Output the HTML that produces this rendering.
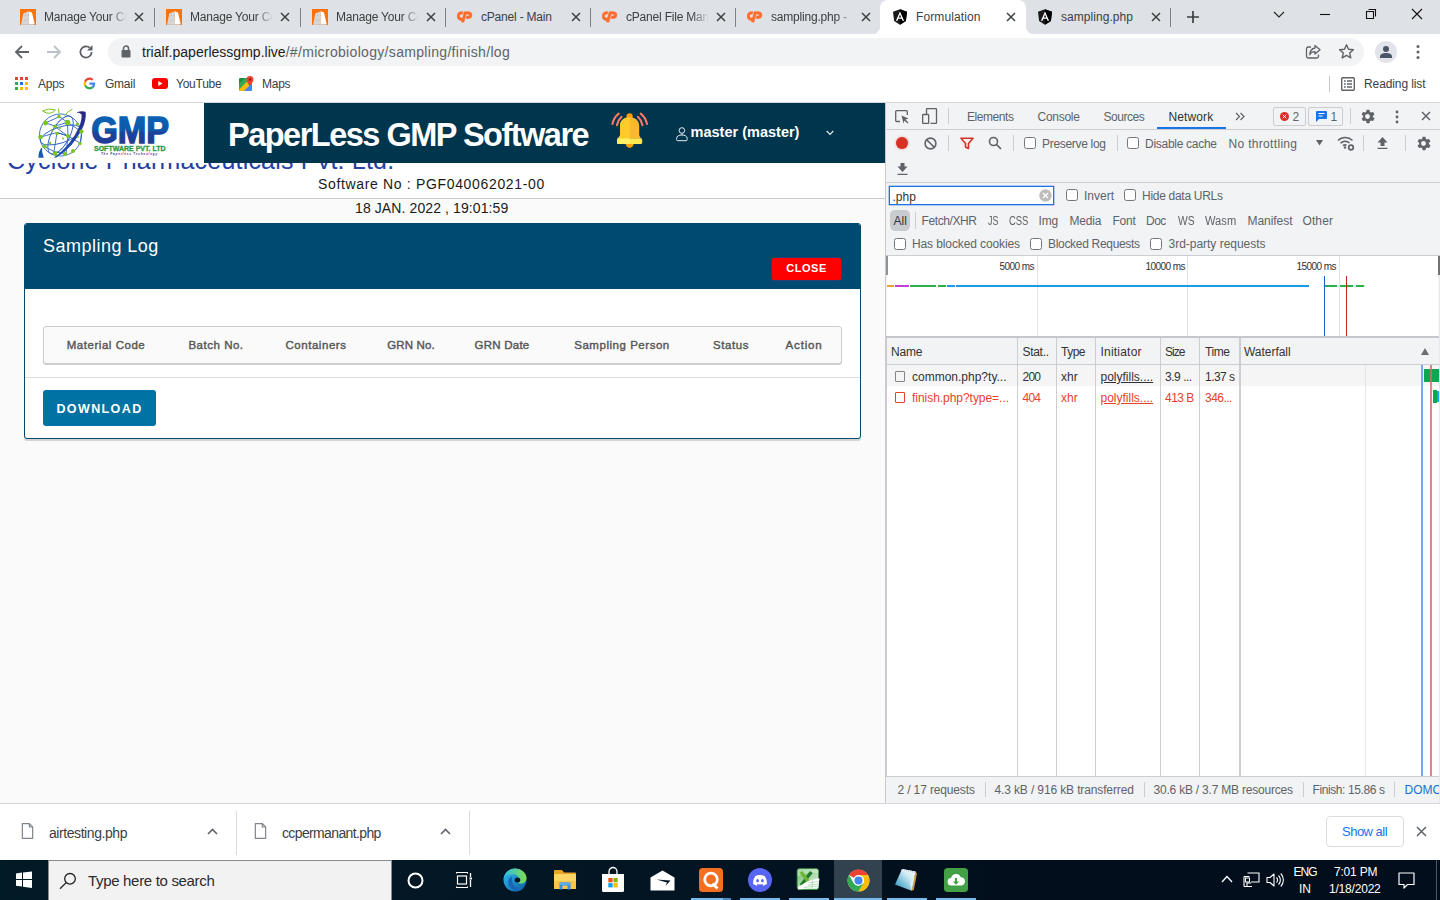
<!DOCTYPE html>
<html><head><meta charset="utf-8">
<style>
*{box-sizing:border-box;margin:0;padding:0}
html,body{width:1440px;height:900px;overflow:hidden;background:#fff;font-family:"Liberation Sans",sans-serif;}
.abs{position:absolute}
#root{position:relative;width:1440px;height:900px;overflow:hidden}
/* ---------- chrome tab strip ---------- */
#tabstrip{position:absolute;left:0;top:0;width:1440px;height:34px;background:#dee1e6}
.tab{position:absolute;top:0;height:34px;font-size:12px;color:#3c4043;white-space:nowrap}
.tab .t{position:absolute;left:36px;top:10px;width:86px;overflow:hidden;letter-spacing:-0.2px;
  -webkit-mask-image:linear-gradient(90deg,#000 66px,transparent 83px);mask-image:linear-gradient(90deg,#000 66px,transparent 83px)}
.tab .x{position:absolute;left:125px;top:11px;width:12px;height:12px}
.tab .fav{position:absolute;left:12px;top:9px;width:16px;height:16px}
.sep{position:absolute;top:8px;width:1px;height:19px;background:#7f8185}
#atab{position:absolute;left:880px;top:0;width:146px;height:34px;background:#fff;border-radius:8px 8px 0 0}
/* ---------- toolbar ---------- */
#toolbar{position:absolute;left:0;top:34px;width:1440px;height:36px;background:#fff}
#omni{position:absolute;left:108px;top:4px;width:1256px;height:28px;border-radius:14px;background:#f1f3f4}
#bookmarks{position:absolute;left:0;top:70px;width:1440px;height:32px;background:#fff;font-size:12px;color:#3c4043}
#chromeline{position:absolute;left:0;top:102px;width:1440px;height:1px;background:#d5d7da}
.bm{position:absolute;top:7px;letter-spacing:-0.25px}

/* ---------- page ---------- */
#page{position:absolute;left:0;top:103px;width:885px;height:700px;background:#fafafa;overflow:hidden}
#ptop{position:absolute;left:0;top:0;width:885px;height:95px;background:#fff}
#pline{position:absolute;left:0;top:95px;width:885px;height:1px;background:#ccc}
#cy{position:absolute;left:7px;top:43px;font-size:25px;color:#2540a5;white-space:nowrap;letter-spacing:0.2px}
#hdr{position:absolute;left:204px;top:0;width:681px;height:60px;background:#00364d}
#logo{position:absolute;left:0;top:0;width:204px;height:60px;background:#fff}
#ttl{position:absolute;left:227px;top:14px;font-size:32.5px;font-weight:bold;color:#fff;white-space:nowrap;letter-spacing:-1.5px}
.pc{position:absolute;white-space:nowrap;color:#1a1a1a;font-size:13px}
#card{position:absolute;left:24px;top:120px;width:837px;height:216px;background:#fff;border:1px solid #004a70;border-radius:3px;box-shadow:0 2px 0 #d4d4d4;overflow:hidden}
#chead{position:absolute;left:0;top:0;width:835px;height:65px;background:#004a70}
#tbl{position:absolute;left:18px;top:102px;width:799px;height:38px;background:#fafafa;border:1px solid #ccc;border-radius:3px;box-shadow:0 1px 0 #d0d0d0}
.th{position:absolute;top:12px;font-size:11.5px;color:#565656;white-space:nowrap;transform:translateX(-50%);letter-spacing:0.6px;-webkit-text-stroke:0.4px #565656}

/* ---------- devtools ---------- */
#dt{position:absolute;left:885px;top:103px;width:555px;height:700px;background:#f1f3f4;border-left:1px solid #c8cacd;font-size:12px;color:#5f6368;overflow:hidden}
#dt .tx{position:absolute;white-space:nowrap;line-height:14px}
#dt .hl{position:absolute;left:0;width:555px;height:1px;background:#cbcdd1}
#dt .vs{position:absolute;width:1px;height:16px;background:#cbcdd1}
#dt .cb{position:absolute;width:12px;height:12px;border:1px solid #767676;border-radius:2.5px;background:#fff}
#dt .col{position:absolute;top:235px;width:1px;height:438px;background:#cbcdd1}

/* ---------- downloads + taskbar ---------- */
#dl{position:absolute;left:0;top:803px;width:1440px;height:57px;background:#fff;border-top:1px solid #d4d6d9;font-size:14px;color:#3c4043}
#tb{position:absolute;left:0;top:860px;width:1440px;height:40px;background:linear-gradient(90deg,#021a26 0,#031523 45%,#020e1c 70%,#020e1c 100%)}
#tb .ul{position:absolute;top:38px;height:2px;background:#76b9ed}
#tb .w{position:absolute;color:#fff;white-space:nowrap;font-size:12px}
</style></head><body><div id="root">

<!-- TABSTRIP -->
<div id="tabstrip">
  <div id="atab"></div>
<div class="tab" style="left:8px;width:146px"><svg class="fav" viewBox="0 0 16 16"><rect width="16" height="16" fill="#ff7208"/><path d="M3.300 4.400L8.800 2.200 8.800 15.700 1 16z" fill="#d6d6d6"/><path d="M8.800 2.200L12 3.600 14.700 15.300 8.800 15.700z" fill="#fff"/><path d="M1 15.300h13.700v.7H1z" fill="#c4c4c4"/><circle cx="5.500" cy="6.500" r=".55" fill="#b0b0b0"/><circle cx="8.400" cy="6.500" r=".55" fill="#b0b0b0"/><path d="M4.200 11.500l2.400.100 1.900-2.100" stroke="#b8b8b8" stroke-width=".6" fill="none"/></svg><div class="t">Manage Your Co</div><svg class="x" viewBox="0 0 12 12"><path d="M2 2l8 8M10 2l-8 8" stroke="#3c4043" stroke-width="1.5" fill="none"/></svg></div>
<div class="tab" style="left:154px;width:146px"><svg class="fav" viewBox="0 0 16 16"><rect width="16" height="16" fill="#ff7208"/><path d="M3.300 4.400L8.800 2.200 8.800 15.700 1 16z" fill="#d6d6d6"/><path d="M8.800 2.200L12 3.600 14.700 15.300 8.800 15.700z" fill="#fff"/><path d="M1 15.300h13.700v.7H1z" fill="#c4c4c4"/><circle cx="5.500" cy="6.500" r=".55" fill="#b0b0b0"/><circle cx="8.400" cy="6.500" r=".55" fill="#b0b0b0"/><path d="M4.200 11.500l2.400.100 1.900-2.100" stroke="#b8b8b8" stroke-width=".6" fill="none"/></svg><div class="t">Manage Your Co</div><svg class="x" viewBox="0 0 12 12"><path d="M2 2l8 8M10 2l-8 8" stroke="#3c4043" stroke-width="1.5" fill="none"/></svg></div>
<div class="tab" style="left:300px;width:146px"><svg class="fav" viewBox="0 0 16 16"><rect width="16" height="16" fill="#ff7208"/><path d="M3.300 4.400L8.800 2.200 8.800 15.700 1 16z" fill="#d6d6d6"/><path d="M8.800 2.200L12 3.600 14.700 15.300 8.800 15.700z" fill="#fff"/><path d="M1 15.300h13.700v.7H1z" fill="#c4c4c4"/><circle cx="5.500" cy="6.500" r=".55" fill="#b0b0b0"/><circle cx="8.400" cy="6.500" r=".55" fill="#b0b0b0"/><path d="M4.200 11.500l2.400.100 1.900-2.100" stroke="#b8b8b8" stroke-width=".6" fill="none"/></svg><div class="t">Manage Your Co</div><svg class="x" viewBox="0 0 12 12"><path d="M2 2l8 8M10 2l-8 8" stroke="#3c4043" stroke-width="1.5" fill="none"/></svg></div>
<div class="tab" style="left:445px;width:146px"><svg class="fav" viewBox="0 0 16 16"><path d="M5.900 2.800H4.300a4.300 4.300 0 0 0 0 8.600h1.100l.6-2.300H4.400a2 2 0 0 1 0-4h.900z" fill="#ff6c2c" stroke="#ff6c2c" stroke-width=".7"/><path d="M7.300 2.800h4.200a3.300 3.300 0 0 1 .2 6.600H9.200l.6-2.300h1.500a1 1 0 0 0 0-2H9l-2.100 8H4.600z" fill="#ff6c2c" stroke="#ff6c2c" stroke-width=".7"/></svg><div class="t" style="-webkit-mask-image:none;mask-image:none">cPanel - Main</div><svg class="x" viewBox="0 0 12 12"><path d="M2 2l8 8M10 2l-8 8" stroke="#3c4043" stroke-width="1.5" fill="none"/></svg></div>
<div class="tab" style="left:590px;width:146px"><svg class="fav" viewBox="0 0 16 16"><path d="M5.900 2.800H4.300a4.300 4.300 0 0 0 0 8.600h1.100l.6-2.300H4.400a2 2 0 0 1 0-4h.900z" fill="#ff6c2c" stroke="#ff6c2c" stroke-width=".7"/><path d="M7.300 2.800h4.200a3.300 3.300 0 0 1 .2 6.600H9.200l.6-2.300h1.500a1 1 0 0 0 0-2H9l-2.100 8H4.600z" fill="#ff6c2c" stroke="#ff6c2c" stroke-width=".7"/></svg><div class="t">cPanel File Mana</div><svg class="x" viewBox="0 0 12 12"><path d="M2 2l8 8M10 2l-8 8" stroke="#3c4043" stroke-width="1.5" fill="none"/></svg></div>
<div class="tab" style="left:735px;width:146px"><svg class="fav" viewBox="0 0 16 16"><path d="M5.900 2.800H4.300a4.300 4.300 0 0 0 0 8.600h1.100l.6-2.300H4.400a2 2 0 0 1 0-4h.900z" fill="#ff6c2c" stroke="#ff6c2c" stroke-width=".7"/><path d="M7.300 2.800h4.200a3.300 3.300 0 0 1 .2 6.600H9.200l.6-2.300h1.500a1 1 0 0 0 0-2H9l-2.100 8H4.600z" fill="#ff6c2c" stroke="#ff6c2c" stroke-width=".7"/></svg><div class="t">sampling.php - </div><svg class="x" viewBox="0 0 12 12"><path d="M2 2l8 8M10 2l-8 8" stroke="#3c4043" stroke-width="1.5" fill="none"/></svg></div>
<div class="tab" style="left:880px;width:146px"><svg class="fav" viewBox="0 0 16 16"><path d="M8 0.3L1 2.8l1.1 9.2L8 15.7l5.9-3.7L15 2.8z" fill="#1a1a1a"/><path d="M8 0.3v15.4l5.9-3.7L15 2.8z" fill="#000"/><path d="M8 2.6L3.9 11.8h1.6l.85-2.1h3.3l.85 2.1h1.6zM8 5.6l1.1 2.8H6.9z" fill="#fff"/></svg><div class="t" style="-webkit-mask-image:none;mask-image:none;letter-spacing:0.1px">Formulation</div><svg class="x" viewBox="0 0 12 12"><path d="M2 2l8 8M10 2l-8 8" stroke="#3c4043" stroke-width="1.5" fill="none"/></svg></div>
<div class="tab" style="left:1025px;width:146px"><svg class="fav" viewBox="0 0 16 16"><path d="M8 0.3L1 2.8l1.1 9.2L8 15.7l5.9-3.7L15 2.8z" fill="#1a1a1a"/><path d="M8 0.3v15.4l5.9-3.7L15 2.8z" fill="#000"/><path d="M8 2.6L3.9 11.8h1.6l.85-2.1h3.3l.85 2.1h1.6zM8 5.6l1.1 2.8H6.9z" fill="#fff"/></svg><div class="t" style="-webkit-mask-image:none;mask-image:none;letter-spacing:0.05px">sampling.php</div><svg class="x" viewBox="0 0 12 12"><path d="M2 2l8 8M10 2l-8 8" stroke="#3c4043" stroke-width="1.5" fill="none"/></svg></div>
<div class="sep" style="left:154px"></div>
<div class="sep" style="left:300px"></div>
<div class="sep" style="left:445px"></div>
<div class="sep" style="left:590px"></div>
<div class="sep" style="left:735px"></div>
<div class="sep" style="left:1170px"></div>
<svg class="abs" style="left:1185px;top:9px" width="16" height="16" viewBox="0 0 16 16"><path d="M8 2v12M2 8h12" stroke="#3c4043" stroke-width="1.7"/></svg>
<svg class="abs" style="left:1273px;top:9px" width="12" height="12" viewBox="0 0 12 12"><path d="M1 3l5 5 5-5" stroke="#222" stroke-width="1.1" fill="none"/></svg>
<svg class="abs" style="left:1319px;top:9px" width="12" height="12" viewBox="0 0 12 12"><path d="M1 5.5h10" stroke="#111" stroke-width="1.1"/></svg>
<svg class="abs" style="left:1365px;top:8px" width="12" height="12" viewBox="0 0 12 12"><path d="M3.5 1.5h7v7M1.5 3.5h7v7h-7z" stroke="#111" stroke-width="1.1" fill="none"/></svg>
<svg class="abs" style="left:1411px;top:8px" width="12" height="12" viewBox="0 0 12 12"><path d="M1 1l10 10M11 1L1 11" stroke="#111" stroke-width="1.1"/></svg>

  <div class="abs" style="left:872px;top:26px;width:8px;height:8px;background:radial-gradient(circle at 0 0,#dee1e6 8px,#fff 8.5px)"></div>
  <div class="abs" style="left:1026px;top:26px;width:8px;height:8px;background:radial-gradient(circle at 100% 0,#dee1e6 8px,#fff 8.5px)"></div>
</div>

<!-- TOOLBAR -->
<div id="toolbar"><svg class="abs" style="left:14px;top:10px" width="16" height="16" viewBox="0 0 16 16"><path d="M15 8H2.5M8 2L2 8l6 6" stroke="#5f6368" stroke-width="1.8" fill="none"/></svg>
<svg class="abs" style="left:46px;top:10px" width="16" height="16" viewBox="0 0 16 16"><path d="M1 8h12.5M8 2l6 6-6 6" stroke="#bdc1c6" stroke-width="1.8" fill="none"/></svg>
<svg class="abs" style="left:78px;top:10px" width="16" height="16" viewBox="0 0 16 16"><path d="M13.6 8A5.6 5.6 0 1 1 11.7 3.8" stroke="#5f6368" stroke-width="1.8" fill="none"/><path d="M14.5 1v5.5H9z" fill="#5f6368"/></svg>
<div id="omni">
<svg class="abs" style="left:13px;top:7px" width="10" height="13" viewBox="0 0 10 13"><rect x="0.5" y="5" width="9" height="7.5" rx="1" fill="#5f6368"/><path d="M2.5 5.5V3.5a2.5 2.5 0 0 1 5 0v2" stroke="#5f6368" stroke-width="1.5" fill="none"/></svg>
<div class="abs" style="left:34px;top:5.500px;font-size:14px;color:#202124;letter-spacing:0.02px;white-space:nowrap">trialf.paperlessgmp.live<span style="color:#5f6368;letter-spacing:0.32px">/#/microbiology/sampling/finish/log</span></div>
<svg class="abs" style="left:1197px;top:6px" width="17" height="16" viewBox="0 0 17 16"><path d="M6 3H3.2A1.7 1.7 0 0 0 1.5 4.7v7.6A1.7 1.7 0 0 0 3.2 14h8.6a1.7 1.7 0 0 0 1.7-1.700V10.500" stroke="#5f6368" stroke-width="1.3" fill="none"/><path d="M10 1.5l5 4.300-5 4.300V7.600C7 7.600 5.500 9 4.800 10.800 5 7 7 4.500 10 4z" stroke="#5f6368" stroke-width="1.3" fill="none" stroke-linejoin="round"/></svg>
<svg class="abs" style="left:1230px;top:5px" width="17" height="17" viewBox="0 0 17 17"><path d="M8.5 1.800l2 4.500 4.900.5-3.700 3.300 1.100 4.800-4.300-2.500-4.300 2.500 1.100-4.800L1.600 6.800l4.900-.5z" stroke="#5f6368" stroke-width="1.4" fill="none" stroke-linejoin="round"/></svg>
</div>
<div class="abs" style="left:1375px;top:7px;width:22px;height:22px;border-radius:11px;background:#e2e4ea"></div>
<svg class="abs" style="left:1379px;top:11px" width="14" height="14" viewBox="0 0 14 14"><circle cx="7" cy="4" r="3" fill="#4a5568"/><path d="M1 13v-1.500C1 9 4 8 7 8s6 1 6 3.500V13z" fill="#4a5568"/></svg>
<svg class="abs" style="left:1416px;top:10px" width="4" height="16" viewBox="0 0 4 16"><circle cx="2" cy="2.500" r="1.500" fill="#5f6368"/><circle cx="2" cy="8" r="1.500" fill="#5f6368"/><circle cx="2" cy="13.500" r="1.500" fill="#5f6368"/></svg>
</div>
<div id="bookmarks"><svg class="abs" style="left:15px;top:7px" width="13" height="13" viewBox="0 0 13 13">
<rect x="0" y="0" width="3" height="3" fill="#ea4335"/><rect x="5" y="0" width="3" height="3" fill="#ea4335"/><rect x="10" y="0" width="3" height="3" fill="#ea4335"/>
<rect x="0" y="5" width="3" height="3" fill="#34a853"/><rect x="5" y="5" width="3" height="3" fill="#1a73e8"/><rect x="10" y="5" width="3" height="3" fill="#fbbc04"/>
<rect x="0" y="10" width="3" height="3" fill="#34a853"/><rect x="5" y="10" width="3" height="3" fill="#fbbc04"/><rect x="10" y="10" width="3" height="3" fill="#fbbc04"/></svg>
<div class="bm" style="left:38px">Apps</div>
<svg class="abs" style="left:83px;top:7px" width="13" height="13" viewBox="0 0 48 48"><path fill="#4285f4" d="M45 24.500c0-1.600-.1-2.700-.4-4H24v7.700h12c-.3 2-1.600 5-4.600 7l6.600 5.200c4.200-3.800 7-9.400 7-15.900z"/><path fill="#34a853" d="M24 46c6 0 11-2 14.600-5.400L32 35.400c-1.800 1.300-4.300 2.200-8 2.200-5.900 0-10.900-3.900-12.700-9.300l-6.900 5.300C8 41 15.400 46 24 46z"/><path fill="#fbbc05" d="M11.300 28.300A13.600 13.600 0 0 1 10.600 24c0-1.500.3-3 .7-4.300L4.400 14.400A22 22 0 0 0 2 24c0 3.500.9 6.900 2.400 9.800z"/><path fill="#ea4335" d="M24 10.500c4.200 0 7 1.800 8.600 3.300l6.300-6.100C35 4.100 30 2 24 2 15.400 2 8 7 4.400 14.400l6.900 5.300C13.100 14.400 18.100 10.500 24 10.500z"/></svg>
<div class="bm" style="left:105px">Gmail</div>
<svg class="abs" style="left:152px;top:8px" width="16" height="11" viewBox="0 0 16 11"><rect width="16" height="11" rx="3" fill="#f00"/><path d="M6.300 3l4.200 2.500-4.200 2.500z" fill="#fff"/></svg>
<div class="bm" style="left:176px">YouTube</div>
<svg class="abs" style="left:239px;top:6px" width="15" height="15" viewBox="0 0 15 15"><rect x="0" y="2" width="13" height="13" rx="1.500" fill="#34a853"/><path d="M0 13.500L8 5.500l5 9.500H1.500z" fill="#fbbc04"/><path d="M5 15L13 7v6.500a1.500 1.500 0 0 1-1.500 1.500z" fill="#4285f4"/><path d="M0 3.500A1.500 1.500 0 0 1 1.500 2H6l-6 6z" fill="#1e8e3e"/><path d="M11 0a3.500 3.500 0 0 0-3.500 3.500C7.500 6 11 9.500 11 9.500S14.500 6 14.500 3.500A3.500 3.500 0 0 0 11 0z" fill="#ea4335"/><circle cx="11" cy="3.500" r="1.200" fill="#a50e0e"/></svg>
<div class="bm" style="left:262px">Maps</div>
<div class="abs" style="left:1329px;top:6px;width:1px;height:16px;background:#c4c7cc"></div>
<svg class="abs" style="left:1341px;top:7px" width="14" height="14" viewBox="0 0 14 14"><rect x=".7" y=".7" width="12.600" height="12.600" rx="1" stroke="#5f6368" stroke-width="1.400" fill="none"/><path d="M3 4h1.700M3 7h1.700M3 10h1.700M6 4h5M6 7h5M6 10h5" stroke="#5f6368" stroke-width="1.400"/></svg>
<div class="bm" style="left:1364px;letter-spacing:-0.1px">Reading list</div>
</div>
<div id="chromeline"></div>

<div id="page">
<div id="ptop"></div>
<div id="cy">Cyclone Pharmaceuticals Pvt. Ltd.</div>
<div id="pline"></div>
<div id="logo"><svg class="abs" style="left:0;top:-1px" width="204" height="59" viewBox="0 0 204 59">
<defs><linearGradient id="gg" x1="0" y1="0" x2="0" y2="1"><stop offset="0" stop-color="#0b66b8"/><stop offset=".52" stop-color="#0b58aa"/><stop offset=".56" stop-color="#1b439b"/><stop offset="1" stop-color="#263790"/></linearGradient>
<linearGradient id="sw" x1="0" y1="0" x2="0" y2="1"><stop offset="0" stop-color="#2a2385"/><stop offset="1" stop-color="#1a58b8"/></linearGradient></defs>
<g fill="none" stroke="#2f62c4" stroke-width=".9">
<circle cx="60.500" cy="33" r="21"/>
<ellipse cx="60.500" cy="33" rx="9" ry="21" transform="rotate(28 60.500 33)"/>
<ellipse cx="60.500" cy="33" rx="21" ry="8" transform="rotate(-18 60.500 33)"/>
<path d="M45.500 21l14-6.500 8 6 -12.500 3.500zM55 24.500l12.500 9.500M67.500 20.500l14 9M67.500 20.500l.500 13.500 -11 -3.500M40.500 35l16.500-4.500 11 3.500 12 7M57 30.500l-3 19M68 34l-2 18M44.500 44.500l9.500 5 11.500 2.500M81.500 29.500l-1 12"/>
</g>
<path d="M76.400 10.400Q82 8.500 85.700 9.900 86.500 18 82.100 27 78 35 71.700 42.700 65 50.500 56 55.700L54 55.500Q62 50 69.600 40.600 75.500 33 79 25 82 18 81.600 12.500 80 10.500 76.400 10.400z" fill="url(#sw)"/>
<path d="M38.500 55.800Q38.300 49 42 45.300 41.600 50.500 43.800 55.800z" fill="#1a58b8"/>
<g fill="#7ac51f">
<circle cx="45.500" cy="21" r="2.400"/><circle cx="59" cy="14.500" r="1.700"/><circle cx="67.500" cy="20.500" r="2.800"/><circle cx="55" cy="24.500" r="1.900"/><circle cx="40.500" cy="35" r="2.300"/><circle cx="57" cy="31.500" r="1.700"/><circle cx="68" cy="34" r="2"/><circle cx="81.500" cy="29.500" r="2.100"/><circle cx="77.500" cy="22" r="1.500"/><circle cx="44.500" cy="44.500" r="2.100"/><circle cx="55" cy="51.500" r="2.300"/><circle cx="65" cy="52" r="2"/><circle cx="73" cy="49" r="2.100"/><circle cx="80" cy="41.500" r="1.700"/><circle cx="50" cy="41" r="1.300"/><circle cx="63" cy="36.500" r="1"/><circle cx="52" cy="28.500" r="1"/><circle cx="60" cy="26" r="1.100"/><circle cx="78" cy="35" r=".9"/>
</g>
<g fill="none" stroke="#7ac51f" stroke-width="1"><path d="M42.500 9q6-3.500 13-1q-5 6-13 1zM58.500 6.500l.500 5M64.500 13.500q3-4 8-6.500"/></g>
<text x="91.200" y="40.500" font-family="Liberation Sans, sans-serif" font-weight="bold" font-size="36.500" fill="url(#gg)" stroke="url(#gg)" stroke-width="1.500" textLength="78" lengthAdjust="spacingAndGlyphs">GMP</text>
<text x="94" y="49" font-family="Liberation Sans, sans-serif" font-weight="bold" font-size="6.800" fill="#2a9a3c" stroke="#2a9a3c" stroke-width=".3" textLength="71.500" lengthAdjust="spacingAndGlyphs">SOFTWARE PVT. LTD</text>
<text x="101" y="53" font-family="Liberation Sans, sans-serif" font-weight="bold" font-style="italic" font-size="2.900" fill="#3a2a8a" textLength="56" lengthAdjust="spacing">The Paperless Technology</text>
</svg></div>
<div id="hdr">
 <div id="ttl" style="left:24px">PaperLess GMP Software</div>
 <svg class="abs" style="left:406px;top:8px" width="40" height="40" viewBox="0 0 40 40">
<circle cx="19.600" cy="5.300" r="3.100" fill="#ffa000"/>
<path d="M15.700 32.500a4 4.400 0 0 0 8 0z" fill="#ffa000"/>
<path d="M19.600 6.200C14 6.200 10.100 9.500 10.100 15V23.600C10.100 25.500 8.500 27 7 27.700H32.200C30.500 27 29.200 25.500 29.200 23.600V15C29.200 9.500 25 6.200 19.600 6.200z" fill="#fbb82c"/>
<path d="M19.900 6.200C14 6.200 10.100 9.500 10.100 15V23.600C10.100 25.500 8.500 27 7 27.700H19.900z" fill="#ffcb2b"/>
<rect x="7" y="27.500" width="25.200" height="5.400" rx="1.500" fill="#ffe94f"/>
<rect x="7" y="27.500" width="12.900" height="5.400" rx="1.500" fill="#fff066"/>
<g fill="none" stroke="#ff7a66" stroke-width="2" stroke-linecap="round"><path d="M2.400 13.100Q3.700 6.600 8.700 2.600M6.900 14.200Q8 9 11.500 5.700M37 13.100Q35.700 6.600 30.700 2.600M32.500 14.200Q31.400 9 27.900 5.700"/></g>
</svg>
 <div class="abs" id="mm" style="left:486.500px;top:21px;font-size:14.500px;font-weight:bold;color:#fff;white-space:nowrap;letter-spacing:0.01px">master (master)</div>
 <svg class="abs" style="left:472px;top:24px" width="13" height="15" viewBox="0 0 13 15"><circle cx="5.900" cy="3.500" r="2.800" fill="none" stroke="#e8eef2" stroke-width="1"/><path d="M5.900 6.300V8M.600 11.500C.600 9 3 8 5.900 8s5.300 1 5.300 3.500v1.100q0 1.100-1.100 1.100H1.700Q.600 13.700.600 12.600z" fill="none" stroke="#e8eef2" stroke-width="1"/></svg>
<svg class="abs" style="left:622px;top:27px" width="8" height="6" viewBox="0 0 8 6"><path d="M.700 1L4 4.500 7.300 1" fill="none" stroke="#e8eef2" stroke-width="1.100"/></svg>
</div>
<div class="pc" style="left:318px;top:73px;font-size:14px;letter-spacing:0.66px">Software No : PGF040062021-00</div>
<div class="pc" style="left:355px;top:97px;font-size:14px;letter-spacing:0.1px">18 JAN. 2022 , 19:01:59</div>
<div id="card">
 <div id="chead">
  <div class="abs" style="left:18px;top:12px;font-size:18px;color:#fff;white-space:nowrap;letter-spacing:0.48px">Sampling Log</div>
  <div class="abs" style="left:745.500px;top:33px;width:71px;height:23.500px;background:#f00;border:1px solid #2a3f7a;border-radius:3px;color:#fff;font-size:11px;font-weight:bold;letter-spacing:0.55px;text-align:center;line-height:21.500px;padding-left:1px">CLOSE</div>
 </div>
 <div id="tbl">
  <div class="th" style="left:62px;letter-spacing:0.54px">Material Code</div>
  <div class="th" style="left:172px;letter-spacing:0.52px">Batch No.</div>
  <div class="th" style="left:272px;letter-spacing:0.55px">Containers</div>
  <div class="th" style="left:367px;letter-spacing:0.14px">GRN No.</div>
  <div class="th" style="left:458px;letter-spacing:0.24px">GRN Date</div>
  <div class="th" style="left:578px;letter-spacing:0.53px">Sampling Person</div>
  <div class="th" style="left:687px;letter-spacing:0.54px">Status</div>
  <div class="th" style="left:760px;letter-spacing:0.81px">Action</div>
 </div>
 <div class="abs" style="left:0;top:153px;width:835px;height:1px;background:#ddd"></div>
 <div class="abs" style="left:18px;top:166px;width:113px;height:36px;background:#0072a3;border-radius:3px;color:#fff;font-size:12.5px;font-weight:bold;letter-spacing:1.4px;text-align:center;line-height:38px">DOWNLOAD</div>
</div>
</div>

<div id="dt">
<!-- tab bar -->
<svg class="abs" style="left:9px;top:7px" width="15" height="14" viewBox="0 0 15 14"><path d="M5 11.500H1.700a1 1 0 0 1-1-1V1.700a1 1 0 0 1 1-1h9.600a1 1 0 0 1 1 1V5" fill="none" stroke="#5f6368" stroke-width="1.300"/><path d="M6.500 5.500l7 3-3 1 3 3-1 1-3-3-1 3z" fill="#5f6368"/></svg>
<svg class="abs" style="left:36px;top:5px" width="16" height="16" viewBox="0 0 16 16"><path d="M4.500 6V1.500a1 1 0 0 1 1-1h8a1 1 0 0 1 1 1v13a1 1 0 0 1-1 1H8.500" fill="none" stroke="#5f6368" stroke-width="1.300"/><rect x=".65" y="6.500" width="6" height="9" rx=".8" fill="none" stroke="#5f6368" stroke-width="1.300"/></svg>
<div class="vs" style="left:62px;top:5px"></div>
<div class="tx" style="left:81px;top:7px;letter-spacing:-0.43px">Elements</div>
<div class="tx" style="left:151.5px;top:7px;letter-spacing:-0.27px">Console</div>
<div class="tx" style="left:217.5px;top:7px;letter-spacing:-0.45px">Sources</div>
<div class="tx" style="left:282.5px;top:7px;color:#333;letter-spacing:0.11px">Network</div>
<div class="abs" style="left:271px;top:24px;width:69px;height:2px;background:#1a73e8"></div>
<svg class="abs" style="left:349px;top:9px" width="10" height="9" viewBox="0 0 10 9"><path d="M1 1l3.500 3.500L1 8M5.500 1L9 4.500 5.500 8" fill="none" stroke="#5f6368" stroke-width="1.200"/></svg>
<div class="abs" style="left:387px;top:4px;width:33px;height:19px;border:1px solid #cbcdd1;border-radius:2px"></div>
<svg class="abs" style="left:394px;top:9px" width="9" height="9" viewBox="0 0 9 9"><circle cx="4.500" cy="4.500" r="4.500" fill="#d93025"/><path d="M2.800 2.800l3.400 3.400M6.200 2.800L2.800 6.200" stroke="#fff" stroke-width="1"/></svg>
<div class="tx" style="left:406.5px;top:7px">2</div>
<div class="abs" style="left:422px;top:4px;width:35px;height:19px;border:1px solid #cbcdd1;border-radius:2px"></div>
<svg class="abs" style="left:429.5px;top:8px" width="11" height="11" viewBox="0 0 11 11"><path d="M1 0h9a1 1 0 0 1 1 1v6a1 1 0 0 1-1 1H3l-3 3V1a1 1 0 0 1 1-1z" fill="#1a73e8"/><path d="M2.500 2.500h6M2.500 5h4" stroke="#fff" stroke-width="1"/></svg>
<div class="tx" style="left:444.5px;top:7px">1</div>
<div class="vs" style="left:463.5px;top:5px"></div>
<svg class="abs" style="left:473.5px;top:5.5px" width="15" height="15" viewBox="0 0 14 14"><path fill-rule="evenodd" d="M7 4.700A2.300 2.300 0 1 0 7 9.300 2.300 2.300 0 0 0 7 4.700zM12.200 7.700l1.300 1-.100.400-1.200 2.100-.400.100-1.500-.600q-.500.400-1.100.600l-.200 1.600-.300.300H6.300l-.300-.300-.200-1.600q-.600-.200-1.100-.600l-1.500.600-.400-.100L1.600 9.100l.100-.400 1.300-1a4 4 0 0 1 0-1.400l-1.300-1-.100-.400L2.800 2.800l.400-.100 1.500.600q.500-.400 1.100-.600L6 1.100l.300-.300h2.400l.300.300.200 1.600q.600.200 1.100.600l1.500-.600.400.100 1.200 2.100-.100.400-1.300 1a4 4 0 0 1 0 1.400z" fill="#5f6368"/></svg>
<svg class="abs" style="left:508.5px;top:7px" width="4" height="14" viewBox="0 0 4 14"><circle cx="2" cy="2" r="1.400" fill="#5f6368"/><circle cx="2" cy="7" r="1.400" fill="#5f6368"/><circle cx="2" cy="12" r="1.400" fill="#5f6368"/></svg>
<svg class="abs" style="left:535px;top:8px" width="10" height="10" viewBox="0 0 10 10"><path d="M1 1l8 8M9 1L1 9" stroke="#5f6368" stroke-width="1.500"/></svg>
<div class="hl" style="top:26px"></div>
<!-- toolbar -->
<div class="abs" style="left:10px;top:34px;width:12px;height:12px;border-radius:6px;background:#d93025;box-shadow:0 0 2.500px #e8908a"></div>
<svg class="abs" style="left:38px;top:33.5px" width="13" height="13" viewBox="0 0 13 13"><circle cx="6.500" cy="6.500" r="5.400" fill="none" stroke="#5f6368" stroke-width="1.600"/><path d="M2.700 2.700l7.600 7.600" stroke="#5f6368" stroke-width="1.600"/></svg>
<div class="vs" style="left:62px;top:32px"></div>
<svg class="abs" style="left:74px;top:34px" width="14" height="13" viewBox="0 0 14 13"><path d="M1 1.200h12L8.500 6.500v5l-3 -1.500v-3.500z" fill="none" stroke="#d93025" stroke-width="1.600" stroke-linejoin="round"/></svg>
<svg class="abs" style="left:102px;top:33px" width="14" height="14" viewBox="0 0 14 14"><circle cx="5.500" cy="5.500" r="4" fill="none" stroke="#5f6368" stroke-width="1.600"/><path d="M8.500 8.500l4.500 4.500" stroke="#5f6368" stroke-width="1.700"/></svg>
<div class="vs" style="left:127px;top:32px"></div>
<div class="cb" style="left:138px;top:34px"></div>
<div class="tx" style="left:156px;top:34px;letter-spacing:-0.31px">Preserve log</div>
<div class="vs" style="left:230.5px;top:32px"></div>
<div class="cb" style="left:241px;top:34px"></div>
<div class="tx" style="left:259px;top:34px;letter-spacing:-0.28px">Disable cache</div>
<div class="tx" style="left:342.5px;top:34px;letter-spacing:0.32px">No throttling</div>
<svg class="abs" style="left:430px;top:37px" width="7" height="6" viewBox="0 0 7 6"><path d="M0 0h7L3.500 5.500z" fill="#5f6368"/></svg>
<svg class="abs" style="left:451px;top:33px" width="18" height="15" viewBox="0 0 18 15"><path d="M1 4.500a10.500 10.500 0 0 1 14.500 0M3.500 7.200a7 7 0 0 1 9 -.400M6 9.700a3.500 3.500 0 0 1 3.600-.500" fill="none" stroke="#5f6368" stroke-width="1.500"/><circle cx="8" cy="11.500" r="1.200" fill="#5f6368"/><circle cx="14" cy="11.500" r="2.300" fill="none" stroke="#5f6368" stroke-width="1.700"/></svg>
<div class="vs" style="left:477px;top:32px"></div>
<svg class="abs" style="left:490.5px;top:34px" width="11" height="12" viewBox="0 0 11 12"><path d="M5.500 0l5 5.500H7.500V9h-4V5.500H.5zM.5 10.700h10V12H.5z" fill="#5f6368"/></svg>
<div class="vs" style="left:519px;top:32px"></div>
<svg class="abs" style="left:529.5px;top:32.5px" width="15" height="15" viewBox="0 0 14 14"><path fill-rule="evenodd" d="M7 4.700A2.300 2.300 0 1 0 7 9.300 2.300 2.300 0 0 0 7 4.700zM12.200 7.700l1.300 1-.100.400-1.200 2.100-.400.100-1.500-.600q-.500.400-1.100.600l-.200 1.600-.300.300H6.300l-.300-.300-.200-1.600q-.600-.200-1.100-.600l-1.500.600-.400-.100L1.600 9.100l.100-.400 1.300-1a4 4 0 0 1 0-1.400l-1.300-1-.100-.400L2.800 2.800l.400-.100 1.500.600q.500-.400 1.100-.600L6 1.100l.300-.300h2.400l.300.300.200 1.600q.600.200 1.100.600l1.500-.600.400.100 1.200 2.100-.100.400-1.300 1a4 4 0 0 1 0 1.400z" fill="#5f6368"/></svg>
<svg class="abs" style="left:10.5px;top:60px" width="11" height="12" viewBox="0 0 11 12"><path d="M3.500 0h4v3.500h3L5.500 9 .5 3.500h3zM.5 10.700h10V12H.5z" fill="#5f6368"/></svg>
<div class="hl" style="top:79px"></div>
<!-- filter -->
<div class="abs" style="left:3px;top:82.5px;width:165px;height:19.500px;background:#fff;border:1px solid #1a73e8;box-shadow:0 0 0 .3px #1a73e8"></div>
<div class="tx" style="left:6.5px;top:86.5px;color:#333;font-size:12px">.php</div>
<svg class="abs" style="left:153px;top:85.5px" width="13" height="13" viewBox="0 0 13 13"><circle cx="6.500" cy="6.500" r="6.200" fill="#bdbdbd"/><path d="M4 4l5 5M9 4L4 9" stroke="#fff" stroke-width="1.300"/></svg>
<div class="cb" style="left:180px;top:86px"></div>
<div class="tx" style="left:198px;top:86px;letter-spacing:-0.0px">Invert</div>
<div class="cb" style="left:238px;top:86px"></div>
<div class="tx" style="left:256px;top:86px;letter-spacing:-0.29px">Hide data URLs</div>
<div class="abs" style="left:4px;top:107px;width:20px;height:21px;border-radius:5px;background:#c8ccd1"></div>
<div class="tx" style="left:7.5px;top:111px;color:#333">All</div>
<div class="vs" style="left:28.5px;top:109px;height:17px"></div>
<div class="tx" style="left:35.5px;top:111px;letter-spacing:-0.4px">Fetch/XHR</div>
<div class="tx" style="left:101.5px;top:111px;letter-spacing:0;transform:scaleX(.74);transform-origin:0 0">JS</div>
<div class="tx" style="left:122.5px;top:111px;letter-spacing:0;transform:scaleX(.785);transform-origin:0 0">CSS</div>
<div class="tx" style="left:152.5px;top:111px;letter-spacing:-0.11px">Img</div>
<div class="tx" style="left:183.5px;top:111px;letter-spacing:-0.17px">Media</div>
<div class="tx" style="left:226.5px;top:111px;letter-spacing:-0.24px">Font</div>
<div class="tx" style="left:260px;top:111px;letter-spacing:-0.52px">Doc</div>
<div class="tx" style="left:291.5px;top:111px;letter-spacing:0;transform:scaleX(.855);transform-origin:0 0">WS</div>
<div class="tx" style="left:319px;top:111px;letter-spacing:0;transform:scaleX(.93);transform-origin:0 0">Wasm</div>
<div class="tx" style="left:361.5px;top:111px;letter-spacing:-0.05px">Manifest</div>
<div class="tx" style="left:416.5px;top:111px;letter-spacing:0.1px">Other</div>
<div class="cb" style="left:8px;top:134.5px"></div>
<div class="tx" style="left:26px;top:134.300px;letter-spacing:-0.11px">Has blocked cookies</div>
<div class="cb" style="left:144px;top:134.5px"></div>
<div class="tx" style="left:162px;top:134.300px;letter-spacing:-0.31px">Blocked Requests</div>
<div class="cb" style="left:264px;top:134.5px"></div>
<div class="tx" style="left:282.5px;top:134.300px;letter-spacing:-0.02px">3rd-party requests</div>
<div class="hl" style="top:152px"></div>

<!-- overview -->
<div class="abs" style="left:1px;top:153px;width:551px;height:80px;background:#fff"></div>
<div class="abs" style="left:0px;top:153px;width:2px;height:19px;background:#8f9398"></div>
<div class="abs" style="left:552px;top:153px;width:2px;height:19px;background:#6e7277"></div>
<div class="abs" style="left:150.5px;top:153px;width:1px;height:80px;background:#e3e3e3"></div>
<div class="abs" style="left:301px;top:153px;width:1px;height:80px;background:#e3e3e3"></div>
<div class="abs" style="left:452.5px;top:153px;width:1px;height:80px;background:#e3e3e3"></div>
<div class="tx" style="left:48px;top:157px;width:100px;text-align:right;font-size:10px;color:#333;letter-spacing:-0.56px">5000 ms</div>
<div class="tx" style="left:199px;top:157px;width:100px;text-align:right;font-size:10px;color:#333;letter-spacing:-0.56px">10000 ms</div>
<div class="tx" style="left:350px;top:157px;width:100px;text-align:right;font-size:10px;color:#333;letter-spacing:-0.56px">15000 ms</div>
<div class="abs" style="left:1px;top:181.5px;width:7px;height:2px;background:#e8a23a"></div>
<div class="abs" style="left:9px;top:181.5px;width:14px;height:2px;background:#c13fd6"></div>
<div class="abs" style="left:24px;top:181.5px;width:26px;height:2px;background:#2bb04a"></div>
<div class="abs" style="left:52px;top:181.5px;width:8px;height:2px;background:#2bb04a"></div>
<div class="abs" style="left:61px;top:181.5px;width:8px;height:2px;background:#1a9ae8"></div>
<div class="abs" style="left:70px;top:181.5px;width:353px;height:2px;background:#1a9ae8"></div>
<div class="abs" style="left:437px;top:181.5px;width:42px;height:2px;background:#cdeef0"></div>
<div class="abs" style="left:439px;top:181.5px;width:12px;height:2px;background:#2bb04a"></div>
<div class="abs" style="left:454px;top:181.5px;width:13px;height:2px;background:#2bb04a"></div>
<div class="abs" style="left:470px;top:181.5px;width:8px;height:2px;background:#2bb04a"></div>
<div class="abs" style="left:438px;top:173px;width:1.300px;height:60px;background:#1a5fc8"></div>
<div class="abs" style="left:460px;top:173px;width:1.300px;height:60px;background:#c0281e"></div>
<div class="hl" style="top:233px;height:2px;background:#c4c7cb"></div>
<!-- table -->
<div class="abs" style="left:0;top:262px;width:554px;height:411px;background:#fff"></div>
<div class="abs" style="left:0;top:262px;width:554px;height:20.500px;background:#f5f5f5"></div>
<div class="hl" style="top:261px"></div>
<div class="col" style="left:131px"></div><div class="col" style="left:170px"></div><div class="col" style="left:209px"></div>
<div class="col" style="left:274px"></div><div class="col" style="left:313px"></div><div class="col" style="left:353px;width:1.500px"></div>
<div class="abs" style="left:479px;top:262px;width:1px;height:411px;background:#e6e6e6"></div>
<div class="abs" style="left:535px;top:262px;width:2px;height:411px;background:#7aa7e6"></div>

<div class="tx" style="left:5px;top:242px;color:#333;letter-spacing:-0.17px">Name</div>
<div class="tx" style="left:136.5px;top:242px;color:#333;letter-spacing:-0.3px">Stat..</div>
<div class="tx" style="left:175px;top:242px;color:#333;letter-spacing:-0.51px">Type</div>
<div class="tx" style="left:214.5px;top:242px;color:#333;letter-spacing:0.21px">Initiator</div>
<div class="tx" style="left:279px;top:242px;color:#333;letter-spacing:-0.95px">Size</div>
<div class="tx" style="left:319px;top:242px;color:#333;letter-spacing:-0.41px">Time</div>
<div class="tx" style="left:358px;top:242px;color:#333;letter-spacing:-0.03px">Waterfall</div>
<svg class="abs" style="left:535px;top:245px" width="8" height="7" viewBox="0 0 8 7"><path d="M4 0l4 7H0z" fill="#6e6e6e"/></svg>
<!-- row1 -->
<div class="abs" style="left:9px;top:267.5px;width:10px;height:11.500px;border:1px solid #80868b;border-radius:1px;background:#f5f5f5"></div>
<div class="tx" style="left:26px;top:267px;color:#333;letter-spacing:0.0px">common.php?ty...</div>
<div class="tx" style="left:136.5px;top:267px;color:#333;letter-spacing:-0.77px">200</div>
<div class="tx" style="left:175px;top:267px;color:#333">xhr</div>
<div class="tx" style="left:214.5px;top:267px;color:#333;text-decoration:underline">polyfills....</div>
<div class="tx" style="left:279px;top:267px;color:#333;letter-spacing:-0.47px">3.9 ...</div>
<div class="tx" style="left:319px;top:267px;color:#333;letter-spacing:-0.54px">1.37 s</div>
<div class="abs" style="left:538px;top:266px;width:15px;height:13px;background:#0aa84f"></div>
<!-- row2 -->
<div class="abs" style="left:9px;top:288.5px;width:10px;height:11.500px;border:1px solid #e8412c;border-radius:1px;background:#fff"></div>
<div class="tx" style="left:26px;top:288px;color:#e8412c;letter-spacing:-0.04px">finish.php?type=...</div>
<div class="tx" style="left:136.5px;top:288px;color:#e8412c;letter-spacing:-0.77px">404</div>
<div class="tx" style="left:175px;top:288px;color:#e8412c">xhr</div>
<div class="tx" style="left:214.5px;top:288px;color:#e8412c;text-decoration:underline">polyfills....</div>
<div class="tx" style="left:279px;top:288px;color:#e8412c;letter-spacing:-0.54px">413 B</div>
<div class="tx" style="left:319px;top:288px;color:#e8412c;letter-spacing:-0.53px">346...</div>
<div class="abs" style="left:547px;top:287px;width:4px;height:13px;background:#0aa84f"></div>
<div class="abs" style="left:551px;top:288px;width:2px;height:11px;background:#1aa3f5"></div>
<div class="abs" style="left:544px;top:262px;width:2px;height:411px;background:#d46a6a;opacity:.8"></div>
<div class="abs" style="left:0;top:235px;width:1px;height:465px;background:#c8cbd0"></div>
<!-- status bar -->
<div class="abs" style="left:0;top:673px;width:555px;height:27px;background:#f1f3f4;border-top:1px solid #cbcdd1"></div>
<div class="tx" style="left:11.5px;top:680px;letter-spacing:-0.14px">2 / 17 requests</div>
<div class="vs" style="left:99px;top:679px;height:15px"></div>
<div class="tx" style="left:108.5px;top:680px;letter-spacing:-0.13px">4.3 kB / 916 kB transferred</div>
<div class="vs" style="left:257.5px;top:679px;height:15px"></div>
<div class="tx" style="left:267.5px;top:680px;letter-spacing:-0.21px">30.6 kB / 3.7 MB resources</div>
<div class="vs" style="left:416.5px;top:679px;height:15px"></div>
<div class="tx" style="left:426.5px;top:680px;letter-spacing:-0.4px">Finish: 15.86 s</div>
<div class="vs" style="left:508px;top:679px;height:15px"></div>
<div class="tx" style="left:518.5px;top:680px;color:#1a6fd8">DOMContentLoaded</div>
<div class="abs" style="left:553px;top:153px;width:1px;height:547px;background:#e6e9f2"></div>
<div class="abs" style="left:552px;top:153px;width:2px;height:19px;background:#6e7277"></div>

</div>

<div id="dl">
<svg class="abs" style="left:21px;top:19px" width="13" height="16" viewBox="0 0 12.300 16"><path d="M1 .700h7l3.300 3.300V15.300H1z" fill="#fff" stroke="#80868b" stroke-width="1.200"/><path d="M8 .700V4h3.300" fill="none" stroke="#80868b" stroke-width="1.200"/></svg>
<div class="abs" style="left:49px;top:21px;white-space:nowrap;letter-spacing:-0.43px">airtesting.php</div>
<svg class="abs" style="left:207px;top:24px" width="11" height="7" viewBox="0 0 11 7"><path d="M1 6l4.500-4.500L10 6" fill="none" stroke="#5f6368" stroke-width="1.600"/></svg>
<div class="abs" style="left:236px;top:7px;width:1px;height:44px;background:#dadce0"></div>
<svg class="abs" style="left:254px;top:19px" width="13" height="16" viewBox="0 0 12.300 16"><path d="M1 .700h7l3.300 3.300V15.300H1z" fill="#fff" stroke="#80868b" stroke-width="1.200"/><path d="M8 .700V4h3.300" fill="none" stroke="#80868b" stroke-width="1.200"/></svg>
<div class="abs" style="left:282px;top:21px;white-space:nowrap;letter-spacing:-0.63px">ccpermanant.php</div>
<svg class="abs" style="left:440px;top:24px" width="11" height="7" viewBox="0 0 11 7"><path d="M1 6l4.500-4.500L10 6" fill="none" stroke="#5f6368" stroke-width="1.600"/></svg>
<div class="abs" style="left:469px;top:7px;width:1px;height:44px;background:#dadce0"></div>
<div class="abs" style="left:1326px;top:12px;width:78px;height:31px;border:1px solid #dadce0;border-radius:4px"></div>
<div class="abs" style="left:1342px;top:20px;white-space:nowrap;color:#1a73e8;font-size:13px;letter-spacing:-0.51px">Show all</div>
<svg class="abs" style="left:1416px;top:22px" width="11" height="11" viewBox="0 0 11 11"><path d="M1 1l9 9M10 1L1 10" stroke="#5f6368" stroke-width="1.500"/></svg>
</div>

<div id="tb">
<svg class="abs" style="left:16px;top:11px" width="16" height="18" viewBox="0 0 16 18" shape-rendering="geometricPrecision"><path d="M0 2.400L6 1.600V8H0zM7 1.500L16 .400V8H7zM0 9H6V15.500L0 14.700zM7 9H16V17L7 15.700z" fill="#fff"/></svg>
<div class="abs" style="left:48px;top:0;width:344px;height:40px;background:#f2f2f2;border:1px solid #8c8c8c;border-bottom:none"></div>
<svg class="abs" style="left:59px;top:12px" width="18" height="18" viewBox="0 0 18 18"><circle cx="11" cy="6.800" r="5.300" fill="none" stroke="#222" stroke-width="1.300"/><path d="M7.200 10.600L1 16.800" stroke="#222" stroke-width="1.300"/></svg>
<div class="abs" style="left:88px;top:12px;font-size:15px;color:#2b2b2b;white-space:nowrap;letter-spacing:-0.32px">Type here to search</div>
<svg class="abs" style="left:406px;top:11px" width="19" height="19" viewBox="0 0 19 19"><circle cx="9.500" cy="9.500" r="7" fill="none" stroke="#fff" stroke-width="2"/></svg>
<svg class="abs" style="left:455px;top:12px" width="18" height="16" viewBox="0 0 18 16"><path d="M1 1h1M1 15h1M12 1h1M12 15h1M1 .500h12M1 15.500h12" stroke="#fff" stroke-width="1"/><rect x="2.500" y="4" width="9" height="8" fill="none" stroke="#fff" stroke-width="1.200"/><path d="M15.500 1v4M15.500 8v7" stroke="#fff" stroke-width="1.300"/><rect x="14.500" y="5.500" width="2.500" height="2" fill="#fff"/></svg>
<!-- edge -->
<svg class="abs" style="left:503px;top:8px" width="24" height="24" viewBox="0 0 24 24"><defs><linearGradient id="e1" x1="0" y1="0" x2="1" y2="1"><stop offset="0" stop-color="#35c1f1"/><stop offset="1" stop-color="#0c59a4"/></linearGradient><linearGradient id="e2" x1="0" y1="0" x2="1" y2="0"><stop offset="0" stop-color="#2fbfe0"/><stop offset="1" stop-color="#7ddc50"/></linearGradient></defs>
<circle cx="12" cy="12" r="11.500" fill="url(#e1)"/><path d="M.600 11C1.500 5 6 .500 12 .500c6.500 0 11.500 4.500 11.500 9.500 0 3.500-2.500 5.500-5.500 5.500-2 0-3.500-.600-3.500-2 0-1 1-1.300 1-3 0-2.300-2.300-4.200-5.500-4.200C5.500 6.300 1.500 8 .600 11z" fill="url(#e2)"/><path d="M9 8.500c-3 1-4 4-3.500 7 .600 3.500 3.500 6.500 7.500 7.500 3 .200 6-1 8-3.500-2 1.200-5 1.500-7.500.200-3.500-1.800-5-6-4.500-11.200z" fill="#1667b8"/><ellipse cx="14.500" cy="12" rx="2.800" ry="2.500" fill="#031523"/></svg>
<!-- explorer -->
<svg class="abs" style="left:553px;top:9px" width="24" height="22" viewBox="0 0 24 22"><path d="M1 2a1 1 0 0 1 1-1h7l2 2.500h11a1 1 0 0 1 1 1V6H1z" fill="#e9a526"/><rect x="1" y="5" width="22" height="15" rx="1" fill="#ffd566"/><path d="M1 12h22v7a1 1 0 0 1-1 1H2a1 1 0 0 1-1-1z" fill="#f7c648"/><path d="M6.500 20.500v-6a1 1 0 0 1 1-1h9a1 1 0 0 1 1 1v6h-3v-4h-5v4z" fill="#3a8fe0"/><rect x="6.500" y="13.500" width="11" height="2.500" fill="#5aaaf5"/></svg>
<!-- store -->
<svg class="abs" style="left:601px;top:6px" width="24" height="28" viewBox="0 0 24 28"><path d="M8 8V5.500a4 4 0 0 1 8 0V8" fill="none" stroke="#fff" stroke-width="1.300"/><path d="M1 8h22v16.500a1.500 1.500 0 0 1-1.500 1.500h-19A1.500 1.500 0 0 1 1 24.500z" fill="#fff"/><rect x="7.300" y="12" width="4.300" height="4.300" fill="#f25022"/><rect x="12.400" y="12" width="4.300" height="4.300" fill="#7fba00"/><rect x="7.300" y="17.100" width="4.300" height="4.300" fill="#00a4ef"/><rect x="12.400" y="17.100" width="4.300" height="4.300" fill="#ffb900"/></svg>
<!-- mail -->
<svg class="abs" style="left:650px;top:10px" width="25" height="21" viewBox="0 0 25 21"><path d="M.500 7.500L12.500.500l12 7v13H.500z" fill="#fff"/><path d="M6.500 9.500l14 1-5 5.500 1.500-3.500z" fill="#031422"/></svg>
<!-- Q -->
<svg class="abs" style="left:699px;top:8px" width="24" height="24" viewBox="0 0 24 24"><rect width="24" height="24" rx="3.500" fill="#f26f21"/><circle cx="12" cy="11.500" r="6.300" fill="none" stroke="#fff" stroke-width="2.800"/><path d="M13.500 15.500l5 5" stroke="#fff" stroke-width="2.800"/></svg>
<!-- discord -->
<svg class="abs" style="left:748px;top:8px" width="24" height="24" viewBox="0 0 24 24"><circle cx="12" cy="12" r="12" fill="#5865f2"/><path d="M7.200 8.200c1.500-.800 3-1.100 4.800-1.100s3.300.300 4.800 1.100c1.600 2.400 2.300 5 2.100 7.800-1.200.900-2.500 1.500-3.800 1.800l-.800-1.400c.500-.200 1-.400 1.400-.700-2.300 1.100-5.100 1.100-7.400 0 .400.300.900.500 1.400.700l-.800 1.400c-1.300-.300-2.600-.900-3.800-1.800-.200-2.800.500-5.400 2.100-7.800z" fill="#fff"/><ellipse cx="9.600" cy="12.700" rx="1.400" ry="1.600" fill="#5865f2"/><ellipse cx="14.400" cy="12.700" rx="1.400" ry="1.600" fill="#5865f2"/></svg>
<!-- excel -->
<svg class="abs" style="left:796px;top:8px" width="24" height="24" viewBox="0 0 24 24"><defs><linearGradient id="xl" x1="0" y1="0" x2="1" y2="1"><stop offset="0" stop-color="#6fbf73"/><stop offset=".5" stop-color="#a9d9a6"/><stop offset="1" stop-color="#e9f6e8"/></linearGradient></defs>
<rect x="1.200" y=".700" width="21.300" height="20.800" rx="2.200" fill="url(#xl)" stroke="#3f9444" stroke-width=".9"/>
<path d="M1.500 8.500Q10 3.500 22.300 5V2.500Q22 1 20.500 1H3.500Q1.500 1 1.500 3z" fill="#fff" opacity=".35"/>
<path d="M15.300 4L5 17.500" stroke="#1f7a2c" stroke-width="3.300"/>
<path d="M5 4l10.300 13.500" stroke="#6db52f" stroke-width="3.300"/>
<path d="M12.500 12.700L23.500 10.300 22.300 19.600 2.200 21.400 2.200 18.800z" fill="#fff"/>
<path d="M13 15l9.800-1.800M12 17.300l10.500-1.500M16.500 12.300l-.5 7.500M8 19.500l14-1.500" stroke="#9ccc9c" stroke-width=".7" fill="none"/>
</svg>
<div class="abs" style="left:834px;top:0;width:48px;height:40px;background:#33424f"></div>
<!-- chrome -->
<svg class="abs" style="left:846.500px;top:8.500px" width="23" height="23" viewBox="0 0 24 24"><circle cx="12" cy="12" r="11.300" fill="#fff"/><path d="M12 .500A11.500 11.500 0 0 1 21.960 6.250H12a5.750 5.750 0 0 0-4.980 2.875L2.040 6.250A11.500 11.500 0 0 1 12 .500z" fill="#ea4335"/><path d="M21.960 6.250A11.500 11.500 0 0 1 12 23.500l4.980-8.625A5.750 5.750 0 0 0 16.980 9.125z" fill="#fbbc04"/><path d="M21.960 6.250H12a5.750 5.750 0 0 1 4.980 2.875z" fill="#fbbc04"/><path d="M12 23.500A11.500 11.500 0 0 1 2.040 6.250l4.980 8.625A5.750 5.750 0 0 0 12 17.750l4.980-2.875z" fill="#34a853"/><circle cx="12" cy="12" r="5.200" fill="#fff"/><circle cx="12" cy="12" r="4.200" fill="#4285f4"/></svg>
<!-- notepad -->
<svg class="abs" style="left:894px;top:8px" width="24" height="24" viewBox="0 0 24 24"><defs><linearGradient id="np" x1="1" y1="0" x2="0" y2="1"><stop offset="0" stop-color="#ffffff"/><stop offset=".35" stop-color="#cfeaf5"/><stop offset=".75" stop-color="#5db0d0"/><stop offset="1" stop-color="#2b86ad"/></linearGradient></defs>
<path d="M21.300 3.500L23 5.500 19.800 22 17.500 22.700z" fill="#c79a3e"/>
<path d="M8 1L21.500 3.500 17.600 22.800 1 16.500z" fill="url(#np)"/>
<path d="M8 1L21.500 3.500 21 5.800 7.200 3z" fill="#e8f3f7"/>
<path d="M8.500 1.100v1.500M10.500 1.500v1.500M12.500 1.900v1.500M14.500 2.300v1.500M16.500 2.700v1.500M18.500 3v1.500M20.300 3.300v1.500" stroke="#9fb4bd" stroke-width=".6"/>
<path d="M16 15L20.300 9.500 17.600 22.800z" fill="#e6f1f5" opacity=".9"/>
</svg>
<!-- cloud -->
<svg class="abs" style="left:944px;top:8px" width="24" height="24" viewBox="0 0 24 24"><rect width="24" height="24" rx="3.500" fill="#43a047"/><path d="M7.500 17.500a3.700 3.700 0 0 1-.400-7.400 5 5 0 0 1 9.600-.900 4.100 4.100 0 0 1 .300 8.300z" fill="#fff"/><path d="M11 10h2v3.500h2.200L12 16.800 8.800 13.500H11z" fill="#43a047"/></svg>
<div class="ul" style="left:691px;width:40px"></div><div class="ul" style="left:723px;width:8px;background:#4d8cc0"></div>
<div class="ul" style="left:740px;width:40px"></div>
<div class="ul" style="left:789px;width:40px"></div>
<div class="ul" style="left:834px;width:48px"></div>
<div class="ul" style="left:887px;width:40px"></div>
<div class="ul" style="left:936px;width:40px"></div>
<!-- tray -->
<svg class="abs" style="left:1221px;top:15px" width="12" height="8" viewBox="0 0 12 8"><path d="M1 7l5-5.500L11 7" fill="none" stroke="#fff" stroke-width="1.300"/></svg>
<svg class="abs" style="left:1243px;top:12px" width="17" height="16" viewBox="0 0 17 16"><path d="M4.500 1h11.500v9H8M1 4.500h5.500M1 4.500V14M.800 14.500H9M4 14.500v-3.500h4" fill="none" stroke="#fff" stroke-width="1.100"/><rect x="2.500" y="6" width="4" height="4" fill="none" stroke="#fff" stroke-width="1"/></svg>
<svg class="abs" style="left:1266px;top:12px" width="18" height="16" viewBox="0 0 18 16"><path d="M1 5.500h3L8 2v12L4 10.500H1z" fill="none" stroke="#fff" stroke-width="1.100" stroke-linejoin="round"/><path d="M10.500 5.500a3.500 3.500 0 0 1 0 5M12.500 3.500a6.300 6.300 0 0 1 0 9M14.800 1.500a9.500 9.500 0 0 1 0 13" fill="none" stroke="#fff" stroke-width="1.100"/></svg>
<div class="w" style="left:1293.500px;top:5px;letter-spacing:-1px">ENG</div>
<div class="w" style="left:1299px;top:22px">IN</div>
<div class="w" style="left:1334px;top:5px;letter-spacing:-0.2px">7:01 PM</div>
<div class="w" style="left:1329px;top:22px;letter-spacing:-0.2px">1/18/2022</div>
<svg class="abs" style="left:1398px;top:12px" width="17" height="17" viewBox="0 0 17 17"><path d="M1 1h15v11.500H9.500L6 16v-3.500H1z" fill="none" stroke="#fff" stroke-width="1.200" stroke-linejoin="round"/></svg>
<div class="abs" style="left:1436px;top:0;width:1px;height:40px;background:#4a5a66"></div>
</div>

</div></body></html>
